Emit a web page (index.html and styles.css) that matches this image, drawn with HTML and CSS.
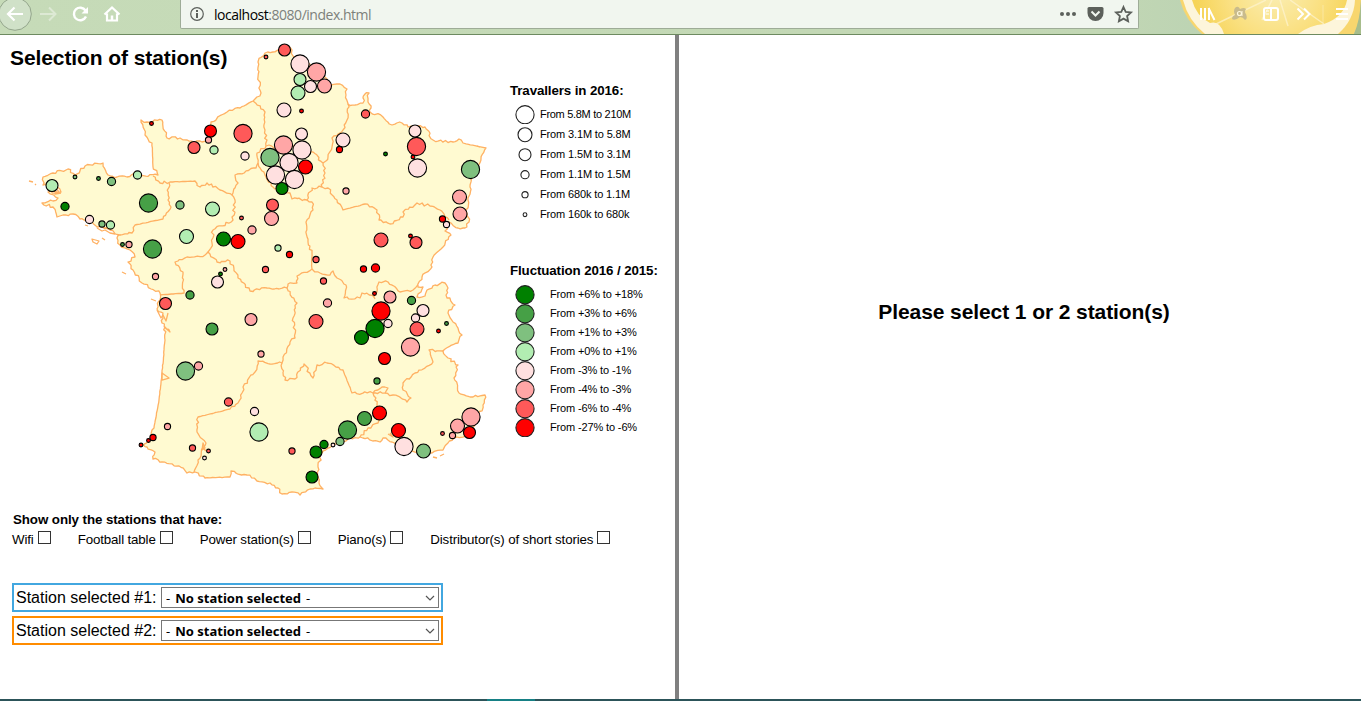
FILE: index.html
```html
<!DOCTYPE html>
<html lang="en">
<head>
<meta charset="utf-8">
<title>Stations</title>
<link rel="stylesheet" href="styles.css">
</head>
<body>
<header class="toolbar">
  <nav class="nav">
    <svg width="180" height="34" viewBox="0 0 180 34" fill="none" stroke="#fff" stroke-width="2">
      <circle cx="15" cy="14" r="16.3" fill="#d0e1c8" stroke="#93a58b" stroke-width="1"/>
      <path d="M23 14H8M14.500 7.500L8 14l6.500 6.500" stroke-width="2.200"/>
      <path d="M40 14h15M49 7.500l6.500 6.500-6.500 6.500" opacity=".4"/>
      <path d="M85.500 10.500A6.300 6.300 0 1 0 86 16.500" stroke-width="2.400"/>
      <path d="M88 7v6.500h-6.500z" fill="#fff" stroke="none"/>
      <path d="M104.500 14.500L112 7.500l7.500 7M107 13.500v7h10v-7" stroke-width="2.200"/>
      <path d="M112 21v-5.500" stroke-width="2.500"/>
    </svg>
  </nav>
  <div class="urlbar">
    <svg class="info" width="14" height="14" viewBox="0 0 14 14"><circle cx="7" cy="7" r="6.300" fill="none" stroke="#5c605b" stroke-width="1.200"/><path d="M7 3v2M7 6v5" stroke="#5c605b" stroke-width="2"/></svg>
    <span class="url">localhost<span class="url-path">:8080/index.html</span></span>
    <svg class="actions" width="76" height="20" viewBox="0 0 76 20" fill="#5c605b">
      <circle cx="3" cy="10" r="2"/><circle cx="9" cy="10" r="2"/><circle cx="15" cy="10" r="2"/>
      <path d="M30 3h13q1.500 0 1.500 1.500v4.500a8 8 0 0 1-16 0v-4.500q0-1.500 1.500-1.500z"/>
      <path d="M32.500 7.500l4 4 4-4" fill="none" stroke="#f1f6ef" stroke-width="2"/>
      <path d="M64.500 3l2.200 4.800 5.300.6-3.900 3.600 1 5.200-4.600-2.600-4.600 2.600 1-5.200-3.900-3.600 5.300-.6z" fill="none" stroke="#5c605b" stroke-width="1.800"/>
    </svg>
  </div>
  <svg class="theme" width="222" height="34" viewBox="1139 0 222 34">
    <defs>
      <radialGradient id="pulp" gradientUnits="userSpaceOnUse" cx="1275" cy="-12" r="80">
        <stop offset="0" stop-color="#faefb8"/><stop offset=".6" stop-color="#fae081"/><stop offset="1" stop-color="#f6d458"/>
      </radialGradient>
    </defs>
    <path d="M1180 0Q1185 20 1202 34H1354Q1361 20 1361 0z" fill="#f8d66e"/>
    <path d="M1183 0Q1188 20 1205 34H1338Q1354 20 1355 0z" fill="#fdf5db"/>
    <path d="M1192 0Q1196 16 1210 23Q1220 20 1224 34H1298Q1310 25 1324 24Q1344 17 1347 0z" fill="url(#pulp)"/>
    <path d="M1266 0L1216 24M1272 0l-10 20M1280 0l8 26M1290 0l34 24" stroke="#fdf4d0" stroke-width="1.500" opacity=".7" fill="none"/>
    <path d="M1354 34Q1360 20 1361 0V34z" fill="#a7bd8c"/>
    <g fill="none" stroke="#fff" stroke-width="2">
      <path d="M1201 8v12M1205 8v12M1209 8v12M1208.500 8l6 12"/>
      <rect x="1264" y="8" width="14" height="12" rx="2"/><path d="M1271 8v12"/><path d="M1266 11h3M1266 14h3" stroke-width="1"/>
      <path d="M1297.500 8.500l5.500 5.500-5.500 5.500M1304 8.500l5.500 5.500-5.500 5.500"/>
      <path d="M1323 5v18" stroke-width="1" opacity=".3"/>
      <path d="M1336 9h12M1336 14h12M1336 19h12"/>
    </g>
    <path d="M1235 8q3-3 5 1 4-2 6 0-2 3 0 5 2 5-1 6-2-3-5-3-5 4-8 2 0-3 3-4-2-4 0-7z" fill="#c9bb8c"/>
    <circle cx="1239.500" cy="13.500" r="2" fill="none" stroke="#fff8dc" stroke-width="1.200"/><path d="M1242 11v5" stroke="#fff8dc"/>
  </svg>
</header>
<main class="page">
  <section class="selector">
    <div class="explorer">
      <div class="map">
        <h1 class="title">Selection of station(s)</h1>
        <svg width="500" height="463" viewBox="0 35 500 463">
          <g class="regions" id="regions">
            <path class="land" d="M258 62L265 53 280 50 285 45 292 50 293 56 308 63 325 77 331 85 340 84 347 89 346 95 348 104 355 105 363 103 365 94 369 93 368 102 371 108 370 112 383 117 392 125 402 123 408 127 425 127 433 140 453 142 459 139 463 143 486 148 477 167 470 187 468 200 467 213 469 222 465 228 458 228 449 222 445 231 451 235 443 247 433 257 432 267 422 277 418 287 423 287 421 292 417 297 425 296 427 290 435 285 445 283 448 288 446 295 455 305 448 313 453 322 462 335 458 343 443 351 448 358 458 365 454 378 459 393 473 397 485 395 483 405 475 425 468 437 457 437 448 443 443 450 432 453 422 455 415 452 403 450 392 442 383 438 380 442 360 437 350 438 332 446 322 453 318 467 319 483 323 489 310 489 300 495 292 492 282 494 278 488 270 483 257 481 247 475 231 471 230 477 205 478 195 472 187 473 179 466 162 462 153 459 155 452 147 447 140 445 150 440 154 428 159 400 162 373 165 340 165 327 170 332 162 323 163 313 157 309 160 300 160 293 142 283 133 270 128 262 135 257 130 250 120 245 117 238 120 235 110 230 97 227 92 220 80 219 73 214 63 215 57 217 53 207 42 203 53 201 58 198 48 192 61 192 57 187 43 185 43 177 53 173 68 169 75 175 85 166 103 163 108 175 117 177 127 177 135 172 140 177 158 175 153 167 152 143 145 135 141 120 147 122 162 120 163 127 167 138 180 138 202 142 212 137 211 122 227 112 240 108 253 101 261 93 258 77z"/>
            <path d="M253 101L265 112 265 130 266 146 257 153 258 163 256 168 235 175 238 183 232 195 220 190 207 183 200 187 195 181 170 182 160 183 153 176"/>
            <path d="M266 146L285 148 300 147 313 152 323 163 325 173 322 187 312 188 307 200 292 199 290 193 273 187 265 175 258 163"/>
            <path d="M348 104L347 120 343 130 332 138 332 147 328 157 323 163"/>
            <path d="M322 187L328 188 337 200 343 210 365 204 377 210 379 220 390 224 403 217 403 212 417 203 430 206 440 210 449 220"/>
            <path d="M307 200L312 202 313 210 306 222 308 242 312 253 312 269 297 276 297 283 288 284 287 288 267 288 250 291 238 278 230 261 217 262 208 252 212 243 213 230 233 220 235 200 232 195"/>
            <path d="M169 183L168 200 171 207 163 219 135 225 132 233 120 235"/>
            <path d="M208 252L205 255 187 257 175 262 183 272 184 293 160 295"/>
            <path d="M312 269L320 273 330 275 333 271 337 278 346 285 344 298 360 298 362 293 374 297 379 282 388 282 400 292 413 290 418 285"/>
            <path d="M287 288L297 303 293 318 295 338 290 342 283 357 282 363 270 364 258 361 255 372 243 387 242 393 238 403 230 409 198 417 197 432 206 443 198 460 194 472"/>
            <path d="M282 363L285 380 295 379 304 364 313 378 317 365 327 363 343 370 352 393 373 393 382 387 388 388 385 393 373 393 377 405 378 423 368 428 360 437"/>
            <path d="M385 393L393 395 407 402 411 398 403 390 403 383 415 373 433 362 429 350 443 351"/>
          </g>
          <path class="regions" d="M162 373l7 5-7 2zM203 443l2 5-3 2zM203 448l3 3M92 239l7 2-2 3-4-2zM122 272l4 2M29 181l4 1M35 184l1 1M151 299l5 2M433 457l4 1M440 456l4-2M102 238l3 2M85 225l3 1M97 228l5 3 3-1 5 3 5 1M99 226l6 2 5-1M52 191l5 1-2 2 6-1M55 187l4 5M157 310l4 8 2-3 3 6 2-8M388 434l5 3-3-4M374 297l1 2M480 147l-3-1"/>
          <g class="stations" id="stations"></g>
        </svg>
      </div>
      <aside class="legends">
        <section class="legend sizes">
          <h2>Travallers in 2016:</h2>
          <ul id="sizes"></ul>
        </section>
        <section class="legend colors">
          <h2>Fluctuation 2016 / 2015:</h2>
          <ul id="colors"></ul>
        </section>
      </aside>
    </div>
    <h2 class="filter-title">Show only the stations that have:</h2>
    <div class="filters">
      <label>Wifi<span class="box"></span></label>
      <label>Football table<span class="box"></span></label>
      <label>Power station(s)<span class="box"></span></label>
      <label>Piano(s)<span class="box"></span></label>
      <label>Distributor(s) of short stories<span class="box"></span></label>
    </div>
    <div class="pick first"><span class="pick-label">Station selected #1:</span><div class="select"><span>- <b>No station selected</b> -</span><svg width="10" height="6" viewBox="0 0 10 6"><path d="M1 1l4 4 4-4" fill="none" stroke="#555" stroke-width="1.200"/></svg></div></div>
    <div class="pick second"><span class="pick-label">Station selected #2:</span><div class="select"><span>- <b>No station selected</b> -</span><svg width="10" height="6" viewBox="0 0 10 6"><path d="M1 1l4 4 4-4" fill="none" stroke="#555" stroke-width="1.200"/></svg></div></div>
  </section>
  <section class="details"><h1>Please select 1 or 2 station(s)</h1></section>
</main>
<footer class="taskbar"><span class="task"></span></footer>
<script src="app.js"></script>
</body>
</html>
```

FILE: styles.css
```css
* { box-sizing: border-box; }
body { margin: 0; width: 1361px; height: 701px; overflow: hidden; display: flex; flex-direction: column; background: #fff; color: #000; font-family: "Liberation Sans", Arial, sans-serif; }
svg { display: block; flex: none; }
h1, h2, ul { margin: 0; padding: 0; }
.toolbar { display: flex; height: 35px; flex: none; background: linear-gradient(90deg, #c6dbb8, #c2d7b4 1100px, #b4ceb2); border-bottom: 1px solid #6d8a60; }
.nav { width: 180px; }
.urlbar { width: 959px; height: 29px; display: flex; align-items: center; padding: 0 3px 0 9px; background: #f1f6ef; border: 1px solid #9eac97; border-top: 0; border-radius: 0 0 2px 2px; }
.url { flex: 1; margin-left: 10px; padding-top: 1px; font: 14px "Open Sans", sans-serif; letter-spacing: -.48px; }
.url-path { color: #7d817b; }
.page { display: flex; flex: 1; min-height: 0; }
.selector { width: 679px; border-right: 4px solid #808080; }
.explorer { display: flex; height: 463px; }
.map { position: relative; width: 500px; }
.title { position: absolute; left: 10px; top: 10px; font-size: 21px; line-height: 26px; letter-spacing: -.09px; white-space: nowrap; }
.regions { fill: none; stroke: #ffb163; stroke-width: 1.3; stroke-linejoin: round; }
.land { fill: #fffad1; }
.stations { stroke: #000; stroke-width: 1.1; }
.legends { padding: 47px 0 0 10px; }
.legend h2 { font-size: 13.33px; line-height: 17px; letter-spacing: -.11px; white-space: nowrap; }
.legend ul { list-style: none; font-size: 11px; letter-spacing: -.14px; }
.legend li { display: flex; align-items: center; white-space: nowrap; }
.legend circle { stroke: #222; stroke-width: 1.1; }
.sizes { height: 180px; }
.sizes ul { padding-top: 5px; }
.sizes li { height: 20px; }
.sizes li:first-child { letter-spacing: -.3px; }
.colors ul { padding-top: 5px; }
.colors li { height: 19px; }
.colors span { margin-left: 10px; }
.filter-title { margin: 14px 0 0 13px; font-size: 13.33px; line-height: 16px; letter-spacing: -.08px; }
.filters { display: flex; gap: 27px; margin: 3px 0 0 12px; font-size: 13.33px; line-height: 18px; letter-spacing: -.14px; }
.filters label { display: flex; white-space: nowrap; }
.box { width: 13px; height: 13px; margin-left: 4px; border: 1px solid #333; background: #fff; }
.pick { width: 431px; height: 29px; margin-left: 12px; border: 2px solid; display: flex; align-items: center; padding: 0 2px; }
.first { margin-top: 34px; border-color: #42a7e0; }
.second { margin-top: 4px; border-color: #ff8c00; }
.pick-label { width: 145px; font-size: 16px; white-space: nowrap; }
.select { width: 278px; height: 21px; border: 1px solid #777; display: flex; align-items: center; justify-content: space-between; padding: 0 3px 0 4px; font: 13px "Noto Sans", sans-serif; }
.select b { margin: 0 1.7px; }
.details { flex: 1; padding-top: 263px; text-align: center; }
.details h1 { padding-left: 8px; font-size: 21px; line-height: 28px; letter-spacing: -.09px; }
.taskbar { height: 2px; flex: none; background: #2c5459; }
.task { display: block; width: 48px; height: 2px; margin-left: 487px; background: #168085; }
```

FILE: app.js
```js
const NS = "http://www.w3.org/2000/svg";
// Colour classes, from strongest growth to strongest decline
const COLORS = ["#008000", "#46a046", "#7fc07f", "#b2edb2", "#ffe0e0", "#ffa6a6", "#ff5959", "#ff0000"];
const RADII = [9.1, 7, 6, 4.1, 3.1, 1.9];
// [x, y, size class, colour class]
const STATIONS = [
[284.500,50,2,6],[266,57,5,6],[300,64,0,4],[316.500,72,0,5],[300,79.500,2,3],[310.500,86.500,2,4],[324.500,86,1,5],[298,93,1,3],[284,110,1,4],[301.500,111,5,7],
[301.500,134,2,4],[283.500,145,0,5],[302,150,0,4],[270,157.500,0,2],[289,162.500,0,4],[305.500,167,1,7],[275.500,175,0,4],[294.500,179.500,0,4],[282,188.500,2,0],
[343,140,1,4],[339.500,149.500,4,7],[365.500,114,3,6],[385.500,154,5,0],[415,131,2,4],[416.500,146.500,0,6],[413,157,5,7],[417.500,168,0,4],[470.500,169.500,0,2],[459.500,197,1,5],[460,214,1,5],[346,191,4,5],
[151.500,123.500,5,7],[210.500,131,2,7],[208.500,140,4,5],[194,147.500,2,6],[214,150,3,3],[243,133.500,0,6],[245,156,3,4],
[52,185.500,2,3],[75,177,5,2],[98.500,178.500,5,1],[111.500,181.500,3,2],[137.500,175,3,3],[148.500,203,0,1],[65,206.500,3,0],[89.500,219.500,3,4],[102,224,4,2],[110.500,225,3,3],[180,205,3,2],[212.500,209,1,3],[186.500,236.500,1,3],[152.500,249,0,1],[122.500,244.500,5,1],[129,244.500,4,5],[155.500,276.500,4,5],
[241.500,218,5,6],[252,230,3,5],[223.500,239,1,0],[238,241.500,1,7],[272.500,205,2,6],[271.500,218.500,1,5],[278,248,4,3],[289.500,254.500,4,7],[265.500,269.500,4,6],[316,259.500,4,6],[225,269.500,5,5],[220.500,274,5,0],[217.500,282,2,4],[190,295,3,1],[165.500,303.500,2,6],[251,319.500,2,5],[212,329,2,1],
[381,240,1,6],[410.500,236,5,7],[416,242.500,2,6],[442.500,219,4,7],[446.500,224.500,4,4],[363.500,269,4,7],[375.500,268,3,7],[323.500,281,4,6],[327.500,303,3,5],[316,321.500,1,6],
[374.500,293.500,5,7],[390,297,2,5],[381,311,0,7],[388,323.500,3,4],[375,328.500,0,0],[361.500,337.500,1,0],[411.500,300.500,3,1],[423,310.500,2,4],[415.500,318,3,4],[417,329,1,6],[446.500,323.500,5,1],[438.500,331,5,7],[410.500,347,0,5],[384.500,358.500,2,7],[377,381,4,1],
[185.500,371,0,2],[198.500,366,3,5],[261,354,4,5],[228.500,402,3,6],[254.500,411.500,3,4],[259,432,0,3],[167.500,426.500,4,5],[141,445,5,7],[148.500,440.500,5,7],[153,437.500,4,7],[192.500,448,4,6],[208.500,451,5,6],[204.500,458,5,4],[292,451,4,6],
[312,477,2,0],[316,452,2,0],[324,444.500,3,0],[333,445,5,4],[340,441.500,3,2],[347.500,430,0,1],[364.500,418.500,1,1],[379.500,413,1,7],[398.500,430.500,1,7],[404,446.500,0,4],[423.500,451,1,2],[442.500,433.500,5,6],[452.500,435.500,4,5],[457.500,426,1,5],[471,417,0,5],[469.500,432.500,2,7]
];

// Breaks each border segment into short steps so borders look natural;
let seed = 7;
function random() {
  seed = (seed * 16807) % 2147483647;
  return seed / 2147483647 - 0.5;
}
document.querySelectorAll("#regions path").forEach((path) => {
  const d = path.getAttribute("d");
  const closed = d.endsWith("z");
  const n = d.match(/\d+/g).map(Number);
  const points = [];
  for (let i = 0; i < n.length; i += 2) points.push([n[i], n[i + 1]]);
  if (closed) points.push(points[0]);
  let out = "M" + points[0];
  for (let i = 1; i < points.length; i++) {
    const [ax, ay] = points[i - 1];
    const [bx, by] = points[i];
    const dx = bx - ax, dy = by - ay, length = Math.hypot(dx, dy);
    const steps = Math.max(1, Math.round(length / 2.6));
    const amp = length > 22.5 ? 0.5 : 2.8;
    for (let k = 1; k < steps; k++) {
      const o = random() * amp, t = (k + random() * 0.5) / steps;
      out += "L" + (ax + dx * t - dy / length * o).toFixed(1) + " " + (ay + dy * t + dx / length * o).toFixed(1);
    }
    out += "L" + bx + " " + by;
  }
  path.setAttribute("d", out + (closed ? "z" : ""));
});

function circle(parent, x, y, r, fill) {
  const c = document.createElementNS(NS, "circle");
  c.setAttribute("cx", x);
  c.setAttribute("cy", y);
  c.setAttribute("r", r);
  c.setAttribute("fill", fill);
  parent.appendChild(c);
}
const layer = document.getElementById("stations");
STATIONS.forEach(([x, y, s, c]) => circle(layer, x, y, RADII[s], COLORS[c]));
function legend(id, rows, cy) {
  const ul = document.getElementById(id);
  rows.forEach(([text, r, fill]) => {
    const li = document.createElement("li");
    const svg = document.createElementNS(NS, "svg");
    svg.setAttribute("width", 30);
    svg.setAttribute("height", 20);
    circle(svg, 15, cy, r, fill);
    const span = document.createElement("span");
    span.textContent = text;
    li.append(svg, span);
    ul.appendChild(li);
  });
}
legend("sizes", ["From 5.8M to 210M", "From 3.1M to 5.8M", "From 1.5M to 3.1M", "From 1.1M to 1.5M", "From 680k to 1.1M", "From 160k to 680k"].map((t, i) => [t, RADII[i], "#fff"]), 10.7);
legend("colors", ["From +6% to +18%", "From +3% to +6%", "From +1% to +3%", "From +0% to +1%", "From -3% to -1%", "From -4% to -3%", "From -6% to -4%", "From -27% to -6%"].map((t, i) => [t, RADII[0], COLORS[i]]), 10.7);
```
